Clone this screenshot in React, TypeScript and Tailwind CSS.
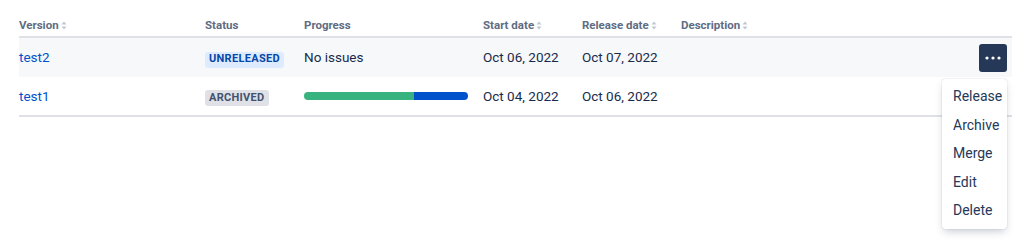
import React from 'react';

const SortIcon = () => (
  <svg width="6" height="9" viewBox="0 0 6 9" className="ml-[2px] inline-block">
    <path d="M3 0.5 L5.5 3.5 H0.5 Z" fill="#c1c7d0" />
    <path d="M3 8.5 L5.5 5.5 H0.5 Z" fill="#c1c7d0" />
  </svg>
);

const Header = ({ label, sortable, className }: { label: string; sortable?: boolean; className: string }) => (
  <div className={`flex items-center text-[11.5px] font-bold text-[#5e6c84] ${className}`}>
    {label}
    {sortable && <SortIcon />}
  </div>
);

const Lozenge = ({ label, tone }: { label: string; tone: 'blue' | 'gray' }) => (
  <span
    className={`inline-flex h-[16px] items-center rounded-[3px] px-[4px] text-[11px] font-bold uppercase tracking-[0.3px] ${
      tone === 'blue' ? 'bg-[#deebff] text-[#0747a6]' : 'bg-[#dfe1e6] text-[#42526e]'
    }`}
  >
    {label}
  </span>
);

const menuItems = ['Release', 'Archive', 'Merge', 'Edit', 'Delete'];

export default function App() {
  return (
    <div className="h-[241px] w-[1024px] bg-white pl-[19px] pr-[12px] pt-[17px] font-['Roboto',sans-serif] text-[13.5px] text-[#172b4d]">
      <div className="flex h-[21px] items-start border-b-2 border-[#dfe1e6]">
        <Header label="Version" sortable className="w-[186px]" />
        <Header label="Status" className="w-[99px]" />
        <Header label="Progress" className="w-[179px]" />
        <Header label="Start date" sortable className="w-[99px]" />
        <Header label="Release date" sortable className="w-[99px]" />
        <Header label="Description" sortable className="flex-1" />
      </div>

      <div className="flex h-[39px] items-center bg-[#f7f8f9]">
        <div className="w-[186px] text-[#0052cc]">test2</div>
        <div className="w-[99px]"><Lozenge label="Unreleased" tone="blue" /></div>
        <div className="w-[179px]">No issues</div>
        <div className="w-[99px]">Oct 06, 2022</div>
        <div className="w-[99px]">Oct 07, 2022</div>
        <div className="flex-1" />
        <div className="relative mr-[5px]">
          <button className="flex h-[28px] w-[28px] items-center justify-center rounded-[3px] bg-[#253858]">
            <svg width="16" height="4" viewBox="0 0 16 4">
              <circle cx="2" cy="2" r="1.6" fill="white" />
              <circle cx="8" cy="2" r="1.6" fill="white" />
              <circle cx="14" cy="2" r="1.6" fill="white" />
            </svg>
          </button>
          <div className="absolute right-0 top-[35px] z-10 w-[65px] rounded-[3px] bg-white py-[4px] shadow-[0_4px_8px_-2px_rgba(9,30,66,0.25),0_0_1px_rgba(9,30,66,0.31)]">
            {menuItems.map((item) => (
              <div key={item} className="flex h-[28.5px] items-center pl-[11px] text-[14px] text-[#253858]">
                {item}
              </div>
            ))}
          </div>
        </div>
      </div>

      <div className="flex h-[40px] items-center border-b-2 border-[#dfe1e6]">
        <div className="w-[186px] text-[#0052cc]">test1</div>
        <div className="w-[99px]"><Lozenge label="Archived" tone="gray" /></div>
        <div className="w-[179px]">
          <div className="flex h-[8px] w-[164px] overflow-hidden rounded-full">
            <div className="w-[110px] bg-[#36b37e]" />
            <div className="flex-1 bg-[#0052cc]" />
          </div>
        </div>
        <div className="w-[99px]">Oct 04, 2022</div>
        <div className="w-[99px]">Oct 06, 2022</div>
        <div className="flex-1" />
      </div>
    </div>
  );
}
